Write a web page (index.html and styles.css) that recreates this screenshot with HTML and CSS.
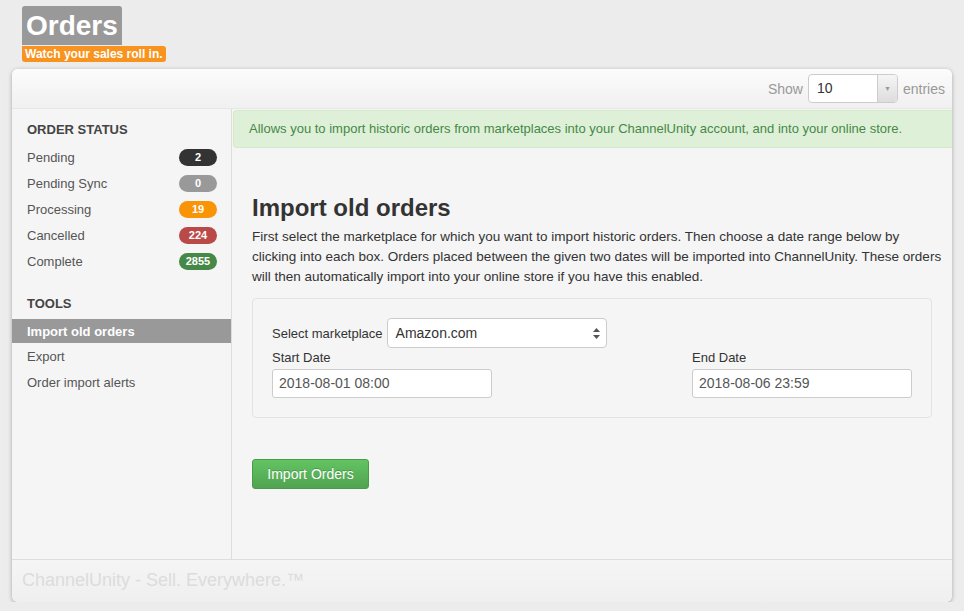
FILE: index.html
```html
<!DOCTYPE html>
<html lang="en">
<head>
  <meta charset="UTF-8" />
  <title>Orders</title>
  <link rel="stylesheet" href="styles.css">
</head>
<body>
  <div class="page-title">
    <h1>Orders</h1>
    <div class="tagline">Watch your sales roll in.</div>
  </div>

  <div class="panel">
    <div class="panel-top">
      <label class="show">Show
        <span class="fake-select">
          <span class="value">10</span>
          <span class="arrow">▼</span>
        </span>
        entries</label>
    </div>

    <div class="panel-body">
      <div class="sidebar">
        <h3>ORDER STATUS</h3>
        <ul class="nav">
          <li>Pending <span class="badge dark">2</span></li>
          <li>Pending Sync <span class="badge grey">0</span></li>
          <li>Processing <span class="badge orange">19</span></li>
          <li>Cancelled <span class="badge red">224</span></li>
          <li>Complete <span class="badge green">2855</span></li>
        </ul>

        <h3 class="second">TOOLS</h3>
        <ul class="nav">
          <li class="active">Import old orders</li>
          <li>Export</li>
          <li>Order import alerts</li>
        </ul>
      </div>

      <div class="content">
        <div class="alert">Allows you to import historic orders from marketplaces into your ChannelUnity account, and into your online store.</div>

        <div class="inner">
          <h2>Import old orders</h2>
          <p>First select the marketplace for which you want to import historic orders. Then choose a date range below by<br>
            clicking into each box. Orders placed between the given two dates will be imported into ChannelUnity. These orders<br>
            will then automatically import into your online store if you have this enabled.</p>

          <div class="well">
            <div class="row-market">
              <span class="lbl">Select marketplace</span>
              <span class="select">
                Amazon.com
                <svg class="updown" width="7" height="11" viewBox="0 0 7 11"><path d="M3.5 0 L7 4 L0 4 Z M0 7 L7 7 L3.5 11 Z" fill="#555"/></svg>
              </span>
            </div>
            <div class="row-dates">
              <div class="field">
                <div class="lbl">Start Date</div>
                <div class="input">2018-08-01 08:00</div>
              </div>
              <div class="field">
                <div class="lbl">End Date</div>
                <div class="input">2018-08-06 23:59</div>
              </div>
            </div>
          </div>

          <button class="btn-success">Import Orders</button>
        </div>
      </div>
    </div>

    <div class="panel-foot">ChannelUnity - Sell. Everywhere.™</div>
  </div>
</body>
</html>
```

FILE: styles.css
```css
body, html {
  margin: 0;
  padding: 0;
  font-family: 'Liberation Sans', Arial, sans-serif;
  background: #ececec;
  color: #333;
}
.page-title {
  padding: 6px 22px 0;
}
.page-title h1 {
  display: inline-block;
  margin: 0;
  padding: 0 4px;
  font-size: 28px;
  line-height: 39px;
  color: #fff;
  background: #999;
  border-radius: 3px 3px 0 0;
}
.tagline {
  display: table;
  margin-top: 1px;
  padding: 0 3px;
  font-size: 12px;
  font-weight: bold;
  line-height: 16px;
  color: #fff;
  background: #f7931e;
  border-radius: 0 3px 3px 3px;
}
.panel {
  margin: 7px 12px 0;
  width: 940px;
  background: #f5f5f5;
  border-radius: 6px;
  box-shadow: 0 1px 4px rgba(0,0,0,0.3);
  overflow: hidden;
}
.panel-top {
  height: 39px;
  display: flex;
  align-items: center;
  justify-content: flex-end;
  padding-right: 7px;
  background: linear-gradient(#fcfcfc, #f0f0f0);
  border-bottom: 1px solid #e6e6e6;
}
.show {
  display: flex;
  align-items: center;
  gap: 5px;
  font-size: 14px;
  color: #999;
}
.fake-select {
  display: flex;
  width: 88px;
  height: 27px;
  border: 1px solid #ccc;
  border-radius: 4px;
  background: #fff;
  overflow: hidden;
}
.fake-select .value {
  flex: 1;
  padding-left: 8px;
  line-height: 27px;
  color: #333;
}
.fake-select .arrow {
  width: 19px;
  border-left: 1px solid #ccc;
  background: linear-gradient(#f5f5f5, #ddd);
  color: #999;
  font-size: 7px;
  line-height: 27px;
  text-align: center;
}
.panel-body {
  display: flex;
  height: 450px;
}
.sidebar {
  flex: 0 0 219px;
  border-right: 1px solid #ddd;
  padding-top: 11px;
}
.sidebar h3 {
  margin: 0 0 4px;
  padding-left: 15px;
  font-size: 13px;
  line-height: 20px;
  color: #444;
}
.sidebar h3.second {
  margin-top: 20px;
}
.nav {
  list-style: none;
  margin: 0;
  padding: 0;
}
.nav li {
  display: flex;
  align-items: center;
  justify-content: space-between;
  height: 26px;
  padding: 0 14px 0 15px;
  font-size: 13px;
  color: #555;
}
.nav li.active {
  height: 24px;
  margin: 5px 0 0;
  background: #999;
  color: #fff;
  font-weight: bold;
}
.badge {
  min-width: 26px;
  padding: 0 6px;
  height: 17px;
  line-height: 17px;
  border-radius: 9px;
  font-size: 11px;
  font-weight: bold;
  color: #fff;
  text-align: center;
}
.badge.dark { background: #333; }
.badge.grey { background: #999; }
.badge.orange { background: #f89406; }
.badge.red { background: #b94a48; }
.badge.green { background: #468847; }
.content {
  flex: 1;
  min-width: 0;
}
.alert {
  margin: 1px 0 0 1px;
  padding: 0 15px;
  height: 36px;
  line-height: 36px;
  font-size: 13px;
  color: #468847;
  background: #dff0d8;
  border: 1px solid #d6e9c6;
  border-right: none;
  border-radius: 4px 0 0 4px;
}
.inner {
  padding: 47px 20px 0;
}
.inner h2 {
  margin: 0 0 6px;
  font-size: 24px;
  line-height: 26px;
  color: #333;
}
.inner p {
  margin: 0 0 11px;
  font-size: 13.5px;
  line-height: 20px;
  white-space: nowrap;
  color: #333;
}
.well {
  padding: 19px;
  background: #f5f5f5;
  border: 1px solid #e3e3e3;
  border-radius: 4px;
}
.lbl {
  font-size: 13px;
  color: #333;
}
.row-market {
  display: flex;
  align-items: center;
  gap: 4px;
}
.select {
  display: flex;
  align-items: center;
  justify-content: space-between;
  width: 204px;
  height: 28px;
  padding: 0 6px 0 8px;
  background: #fff;
  border: 1px solid #ccc;
  border-radius: 4px;
  font-size: 14px;
  color: #333;
}
.row-dates {
  display: flex;
  justify-content: space-between;
  margin-top: 2px;
}
.field .lbl {
  line-height: 16px;
  margin-bottom: 3px;
}
.input {
  width: 206px;
  height: 27px;
  line-height: 27px;
  padding: 0 6px;
  background: #fff;
  border: 1px solid #ccc;
  border-radius: 3px;
  font-size: 14px;
  color: #555;
}
.btn-success {
  margin-top: 41px;
  width: 117px;
  height: 30px;
  font-family: inherit;
  font-size: 14px;
  color: #fff;
  text-shadow: 0 -1px 0 rgba(0,0,0,0.2);
  background: linear-gradient(#62c462, #51a351);
  border: 1px solid #4a9a4a;
  border-radius: 3px;
}
.panel-foot {
  height: 42px;
  line-height: 40px;
  padding-left: 10px;
  border-top: 1px solid #ddd;
  background: linear-gradient(#f5f5f5, #efefef);
  font-size: 18px;
  color: #dcdcdc;
}
```
